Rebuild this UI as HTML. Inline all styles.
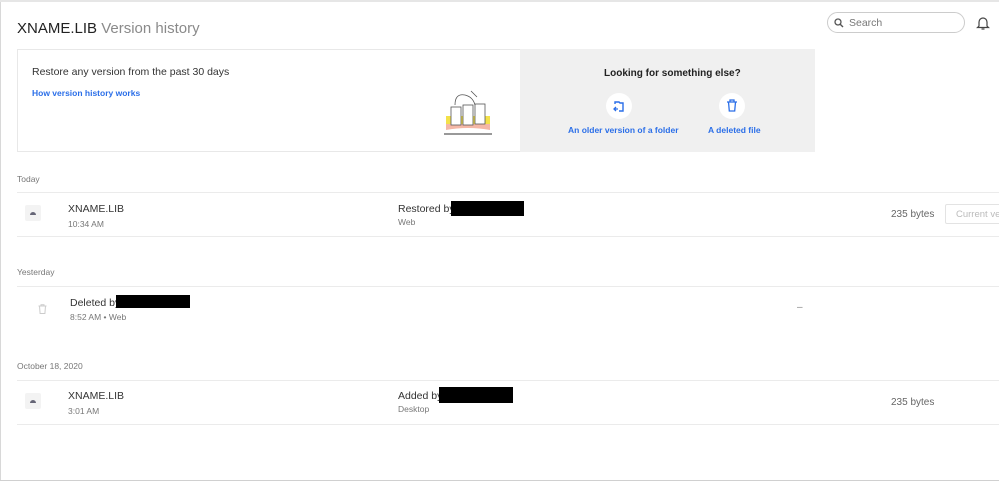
<!DOCTYPE html>
<html><head><style>
*{margin:0;padding:0;box-sizing:border-box}
body{width:999px;height:481px;overflow:hidden;background:#fff;font-family:"Liberation Sans",sans-serif;position:relative}
.a{position:absolute;white-space:nowrap}
.topbar{position:absolute;left:0;top:0;width:999px;height:2px;background:#e6e6e6}
.line{position:absolute;left:17px;width:982px;height:1px;background:#ebebeb}
.sec{font-size:8.5px;color:#777}
.nm{font-size:10.5px;color:#333}
.sub{font-size:8.5px;color:#777}
.blk{position:absolute;background:#000}
.fic{position:absolute;width:16px;height:16px;background:#f3f3f3;border-radius:2px}
.fic:after{content:"";position:absolute;left:5px;top:7px;width:6px;height:3px;background:#667;border-radius:3px 3px 0 0}
.size{font-size:10px;color:#666}
.lnk{color:#2a6ee8;font-weight:bold;font-size:8.5px}
</style></head><body>
<div class="a" style="left:0;top:0;width:1px;height:481px;background:#d8d8d8"></div>
<div class="a" style="left:0;top:480px;width:999px;height:1px;background:#d0d0d0"></div>
<div class="topbar"></div>
<div class="a" style="left:17px;top:20px;font-size:15px;color:#222">XNAME.LIB <span style="color:#8a8a8a">Version history</span></div>
<div class="a" style="left:827px;top:12px;width:138px;height:21px;border:1px solid #ccc;border-radius:11px"></div>
<svg class="a" style="left:834px;top:18px" width="10" height="10" viewBox="0 0 10 10"><circle cx="4" cy="4" r="3" fill="none" stroke="#555" stroke-width="1.3"/><path d="M6.2 6.2 9 9" stroke="#555" stroke-width="1.4"/></svg>
<div class="a" style="left:849px;top:17px;font-size:10.5px;color:#777">Search</div>
<svg class="a" style="left:976px;top:15px" width="14" height="16" viewBox="0 0 14 16"><path d="M3 11V7a4 4 0 0 1 8 0v4l1.5 1.5h-11z" fill="none" stroke="#444" stroke-width="1.2"/><path d="M5.5 14h3" stroke="#444" stroke-width="1.2"/></svg>

<div class="a" style="left:17px;top:49px;width:504px;height:103px;border:1px solid #e8e8e8;background:#fff"></div>
<div class="a" style="left:520px;top:49px;width:295px;height:103px;background:#f0f0f0"></div>
<div class="a" style="left:32px;top:66px;font-size:10.5px;color:#333">Restore any version from the past 30 days</div>
<div class="a lnk" style="left:32px;top:88px">How version history works</div>
<svg class="a" style="left:443px;top:87px" width="52" height="52" viewBox="0 0 52 52"><rect x="3" y="29" width="44" height="8" fill="#f3e14a"/><path d="M3 37h44v6q-22 -4 -44 0z" fill="#f4b7a6"/><rect x="8" y="20" width="10" height="18" fill="#fff" stroke="#555" stroke-width=".8"/><rect x="20" y="18" width="10" height="20" fill="#fff" stroke="#555" stroke-width=".8"/><rect x="32" y="17" width="10" height="20" fill="#fff" stroke="#555" stroke-width=".8"/><path d="M12 18q0-12 10-10 8 2 10 10M28 4l6 6" fill="none" stroke="#555" stroke-width=".8"/><path d="M1 47h48" stroke="#333" stroke-width="1"/></svg>
<div class="a" style="left:604px;top:68px;font-size:10px;font-weight:bold;color:#222">Looking for something else?</div>
<div class="a" style="left:606px;top:93px;width:26px;height:26px;border-radius:50%;background:#fff"></div>
<svg class="a" style="left:612px;top:99px" width="14" height="14" viewBox="0 0 14 14"><path d="M3 5V3h4l1 1h3v8H7" fill="none" stroke="#2a6ee8" stroke-width="1.4"/><path d="M6 10H3M4 8l-2 2 2 2" fill="none" stroke="#2a6ee8" stroke-width="1.3"/></svg>
<div class="a" style="left:719px;top:93px;width:26px;height:26px;border-radius:50%;background:#fff"></div>
<svg class="a" style="left:726px;top:99px" width="12" height="13" viewBox="0 0 12 13"><path d="M1 3h10M4 3V1h4v2M2.5 3l.8 9h5.4l.8-9" fill="none" stroke="#2a6ee8" stroke-width="1.3"/></svg>
<div class="a lnk" style="left:568px;top:125px">An older version of a folder</div>
<div class="a lnk" style="left:708px;top:125px">A deleted file</div>

<div class="a sec" style="left:17px;top:174px">Today</div>
<div class="line" style="top:192px"></div>
<div class="fic" style="left:25px;top:205px"></div>
<div class="a nm" style="left:68px;top:203px">XNAME.LIB</div>
<div class="a sub" style="left:68px;top:219px">10:34 AM</div>
<div class="a nm" style="left:398px;top:203px">Restored by</div>
<div class="blk" style="left:451px;top:201px;width:73px;height:15px"></div>
<div class="a sub" style="left:398px;top:217px">Web</div>
<div class="a size" style="left:891px;top:209px">235 bytes</div>
<div class="a" style="left:945px;top:204px;width:60px;height:20px;border:1px solid #e3e3e3;border-radius:2px;font-size:9.5px;color:#bbb;padding:4px 0 0 10px">Current version</div>
<div class="line" style="top:236px"></div>

<div class="a sec" style="left:17px;top:267px">Yesterday</div>
<div class="line" style="top:286px"></div>
<svg class="a" style="left:38px;top:304px" width="9" height="10" viewBox="0 0 9 10"><path d="M0.5 2h8M3 2V.8h3V2M1.5 2l.6 7.5h4.8l.6-7.5" fill="none" stroke="#ccc" stroke-width="1"/></svg>
<div class="a nm" style="left:70px;top:297px">Deleted by</div>
<div class="blk" style="left:116px;top:295px;width:74px;height:13px"></div>
<div class="a sub" style="left:70px;top:312px">8:52 AM • Web</div>
<div class="a" style="left:797px;top:302px;font-size:10px;color:#888">–</div>

<div class="a sec" style="left:17px;top:361px">October 18, 2020</div>
<div class="line" style="top:380px"></div>
<div class="fic" style="left:25px;top:393px"></div>
<div class="a nm" style="left:68px;top:390px">XNAME.LIB</div>
<div class="a sub" style="left:68px;top:406px">3:01 AM</div>
<div class="a nm" style="left:398px;top:390px">Added by</div>
<div class="blk" style="left:439px;top:387px;width:74px;height:16px"></div>
<div class="a sub" style="left:398px;top:404px">Desktop</div>
<div class="a size" style="left:891px;top:397px">235 bytes</div>
<div class="line" style="top:424px"></div>
</body></html>
